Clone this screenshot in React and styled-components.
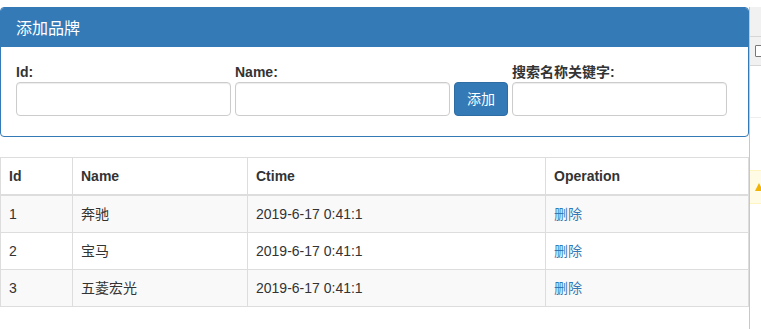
import React from "react";
import styled, { createGlobalStyle } from "styled-components";

const Global = createGlobalStyle`
  html, body { margin: 0; padding: 0; background: #fff; }
  body {
    font-family: "Liberation Sans", Arial, "Noto Sans CJK SC", sans-serif;
    font-size: 14px;
    line-height: 1.42857;
    color: #333;
  }
  * { box-sizing: border-box; }
`;

const Shell = styled.div`
  display: flex;
  height: 329px;
  overflow: hidden;
`;

const Main = styled.main`
  width: 749px;
  flex: none;
  padding-top: 7px;
`;

const Panel = styled.section`
  border: 1px solid #337ab7;
  border-radius: 4px;
  margin-bottom: 20px;
  background: #fff;
`;

const PanelHeading = styled.div`
  background: #337ab7;
  color: #fff;
  padding: 12px 15px 8px;
  border-bottom: 1px solid #337ab7;
  border-radius: 3px 3px 0 0;
`;

const PanelTitle = styled.h3`
  margin: 0;
  font-size: 16px;
  font-weight: normal;
  line-height: 18px;
`;

const PanelBody = styled.div`
  padding: 15px 15px 20px;
  display: flex;
  align-items: flex-end;
  gap: 4px;
`;

const Field = styled.div`
  display: flex;
  flex-direction: column;
`;

const Label = styled.label`
  font-weight: bold;
  line-height: 20px;
  font-size: 14px;
`;

const Input = styled.input`
  width: 215px;
  height: 34px;
  padding: 6px 12px;
  font-size: 14px;
  border: 1px solid #ccc;
  border-radius: 4px;
  box-shadow: inset 0 1px 1px rgba(0, 0, 0, 0.075);
  background: #fff;
  font-family: inherit;
`;

const Button = styled.button`
  height: 34px;
  width: 54px;
  padding: 6px 12px;
  font-size: 14px;
  color: #fff;
  background: #337ab7;
  border: 1px solid #2e6da4;
  border-radius: 4px;
  font-family: inherit;
  line-height: 20px;
`;

const Table = styled.table`
  width: 749px;
  border-collapse: collapse;
  border: 1px solid #ddd;
  table-layout: fixed;
`;

const Th = styled.th`
  text-align: left;
  padding: 8px;
  line-height: 20px;
  border: 1px solid #ddd;
  border-bottom: 2px solid #ddd;
  font-weight: bold;
  width: ${(p) => p.$w}px;
`;

const Row = styled.tr`
  background: ${(p) => (p.$odd ? "#f9f9f9" : "#fff")};
`;

const Td = styled.td`
  padding: 8px;
  line-height: 20px;
  border: 1px solid #ddd;
`;

const Link = styled.a`
  color: #337ab7;
  text-decoration: none;
  cursor: pointer;
`;

const Dev = styled.aside`
  flex: 1;
  margin-top: 7px;
  border-left: 1px solid #c8c8c8;
  display: flex;
  flex-direction: column;
  background: #fff;
`;

const DevBar = styled.div`
  height: ${(p) => p.$h}px;
  background: ${(p) => p.$bg};
  border-bottom: 1px solid ${(p) => p.$line};
  display: flex;
  align-items: center;
  padding-left: 5px;
`;

const DevBox = styled.span`
  width: 10px;
  height: 12px;
  border: 1px solid #777;
  border-radius: 1px;
  background: #fff;
`;

const DevGap = styled.div`
  height: ${(p) => p.$h}px;
`;

const DevWarn = styled.div`
  height: 34px;
  background: #fffbe5;
  border-top: 1px solid #fff5c2;
  border-bottom: 1px solid #fff5c2;
  display: flex;
  align-items: center;
  padding-left: 5px;
`;

const rows = [
  { id: 1, name: "奔驰" },
  { id: 2, name: "宝马" },
  { id: 3, name: "五菱宏光" },
];

export default function App() {
  return (
    <>
      <Global />
      <Shell>
        <Main>
          <Panel>
            <PanelHeading>
              <PanelTitle>添加品牌</PanelTitle>
            </PanelHeading>
            <PanelBody>
              <Field>
                <Label>Id:</Label>
                <Input type="text" />
              </Field>
              <Field>
                <Label>Name:</Label>
                <Input type="text" />
              </Field>
              <Button>添加</Button>
              <Field>
                <Label>搜索名称关键字:</Label>
                <Input type="text" />
              </Field>
            </PanelBody>
          </Panel>
          <Table>
            <thead>
              <tr>
                <Th $w={72}>Id</Th>
                <Th $w={175}>Name</Th>
                <Th $w={298}>Ctime</Th>
                <Th>Operation</Th>
              </tr>
            </thead>
            <tbody>
              {rows.map((r, i) => (
                <Row key={r.id} $odd={i % 2 === 0}>
                  <Td>{r.id}</Td>
                  <Td>{r.name}</Td>
                  <Td>2019-6-17 0:41:1</Td>
                  <Td>
                    <Link>删除</Link>
                  </Td>
                </Row>
              ))}
            </tbody>
          </Table>
        </Main>
        <Dev>
          <DevBar $h={30} $bg="#f1f1f1" $line="#d6d6d6" />
          <DevBar $h={29} $bg="#f1f1f1" $line="#d6d6d6">
            <DevBox />
          </DevBar>
          <DevGap $h={51} />
          <DevBar $h={1} $bg="#eee" $line="#eee" />
          <DevGap $h={52} />
          <DevWarn>
            <svg width="8" height="8" viewBox="0 0 8 8">
              <path d="M4 0 L8 8 L0 8 Z" fill="#f2b400" />
            </svg>
          </DevWarn>
        </Dev>
      </Shell>
    </>
  );
}
